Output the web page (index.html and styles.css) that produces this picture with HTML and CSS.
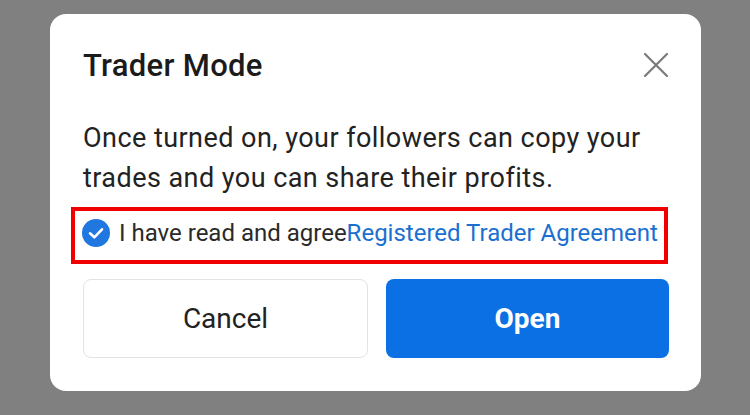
FILE: index.html
```html
<!DOCTYPE html>
<html>
<head>
<meta charset="utf-8">
<link rel="stylesheet" href="styles.css">
</head>
<body>
<div class="dialog">
  <div class="header">
    <h1 class="title">Trader Mode</h1>
    <button class="close" aria-label="Close">
      <svg width="24" height="24" viewBox="0 0 24 24"><path d="M1 1L23 23M23 1L1 23" stroke="#7a7a7a" stroke-width="2.2" stroke-linecap="round" fill="none"/></svg>
    </button>
  </div>
  <p class="desc">Once turned on, your followers can copy your trades and you can share their profits.</p>
  <div class="agree">
    <svg class="check" width="28" height="28" viewBox="0 0 28 28"><circle cx="14" cy="14" r="14" fill="#2077e0"/><path d="M8 14.3L12.3 18.3L20 10.3" stroke="#fff" stroke-width="2.6" stroke-linecap="round" stroke-linejoin="round" fill="none"/></svg>
    <span class="agree-text">I have read and agree<a class="link">Registered Trader Agreement</a></span>
  </div>
  <div class="actions">
    <button class="btn btn-cancel">Cancel</button>
    <button class="btn btn-open">Open</button>
  </div>
</div>
</body>
</html>
```
FILE: styles.css
```css
html, body {
  margin: 0;
  padding: 0;
  background: #808080;
  width: 750px;
  height: 415px;
  overflow: hidden;
  font-family: Roboto, "Liberation Sans", sans-serif;
}
.dialog {
  box-sizing: border-box;
  margin: 14px 0 0 50px;
  width: 651px;
  height: 377px;
  background: #fff;
  border-radius: 16px;
  padding: 32px 32px 32px 33px;
  display: flex;
  flex-direction: column;
}
.header {
  display: flex;
  align-items: center;
  justify-content: space-between;
  height: 40px;
}
.title {
  margin: 0;
  font-size: 31px;
  line-height: 40px;
  font-weight: 500;
  letter-spacing: 0.3px;
  color: #1b1b1b;
}
.close {
  border: 0;
  background: none;
  padding: 0;
  margin-right: 1px;
  width: 24px;
  height: 24px;
  margin-top: -3px;
}
.close svg { display: block; }
.desc {
  margin: 32px 0 0 0;
  font-size: 27px;
  line-height: 40px;
  letter-spacing: 0.45px;
  color: #222;
}
.agree {
  margin: 9px 1px 0 -12px;
  height: 57px;
  box-sizing: border-box;
  border: 4px solid #f00000;
  display: flex;
  align-items: center;
  padding: 0 0 5px 7px;
}
.check { flex: none; display: block; }
.agree-text {
  margin-left: 9px;
  font-size: 24px;
  color: #2a2a2a;
  white-space: nowrap;
}
.link { color: #1a6fd0; }
.actions {
  margin-top: 15px;
  display: flex;
  gap: 18px;
}
.btn {
  flex: 1;
  height: 79px;
  border-radius: 8px;
  font-family: Roboto, "Liberation Sans", sans-serif;
  font-size: 28px;
}
.btn-cancel {
  background: #fff;
  border: 1px solid #e3e3e3;
  color: #222;
}
.btn-open {
  background: #0a70e4;
  border: 0;
  color: #fff;
  font-weight: 700;
}
```
